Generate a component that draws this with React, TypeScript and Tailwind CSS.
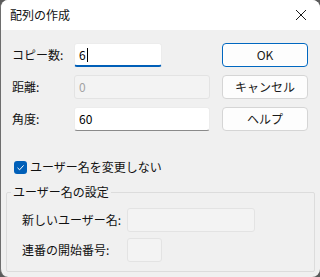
import { useState } from "react"

const font = { fontFamily: '"Noto Sans CJK JP", "Noto Sans", sans-serif' }

function Field({ value, width, disabled, focused }: { value: string; width: string; disabled?: boolean; focused?: boolean }) {
    if (disabled) {
        return (
            <div className={`${width} h-[24px] rounded-[3px] border border-[#e3e3e3] bg-[#f3f3f3] px-[4px] flex items-center text-[12px] text-[#a3a3a3]`}>
                {value}
            </div>
        )
    }
    return (
        <div
            className={`${width} h-[24px] rounded-[3px] border border-[#ececec] bg-white px-[4px] flex items-center text-[12px] text-black ${
                focused ? "border-b-2 border-b-[#005fb8]" : "border-b-[#8a8a8a]"
            }`}
        >
            {value}
            {focused && <span className="ml-[1px] inline-block h-[14px] w-[1px] bg-black" />}
        </div>
    )
}

function Btn({ label, primary }: { label: string; primary?: boolean }) {
    return (
        <button
            type="button"
            className={`h-[24px] w-[86px] rounded-[4px] bg-[#fdfdfd] text-[12px] text-[#1a1a1a] ${
                primary ? "border border-[#0067c0] shadow-[inset_0_0_0_1px_#ffffff]" : "border border-[#d5d5d5]"
            }`}
        >
            {label}
        </button>
    )
}

export default function App() {
    const [keepName, setKeepName] = useState(true)

    return (
        <div className="w-[320px] h-[277px] bg-[#5b5b5b]" style={font}>
            <div className="flex h-full flex-col overflow-hidden rounded-[8px] border-l border-l-[#6e6e6e] bg-[#f0f0f0]">
                <div className="flex h-[30px] shrink-0 items-center justify-between bg-white pl-[9px] pr-[12px]">
                    <span className="text-[12px] text-[#111]">配列の作成</span>
                    <svg width="12" height="12" viewBox="0 0 12 12" className="mr-[1px]">
                        <path d="M1 1 L11 11 M11 1 L1 11" stroke="#1a1a1a" strokeWidth="1" />
                    </svg>
                </div>

                <div className="flex pt-[13px] pr-[12px]">
                    <div className="flex flex-1 flex-col gap-[8px] pl-[11px]">
                        <div className="flex h-[24px] items-center">
                            <span className="w-[62px] text-[12px] text-[#111]">コピー数:</span>
                            <Field value="6" width="w-[88px]" focused />
                        </div>
                        <div className="flex h-[24px] items-center">
                            <span className="w-[62px] text-[12px] text-[#111]">距離:</span>
                            <Field value="0" width="w-[136px]" disabled />
                        </div>
                        <div className="flex h-[24px] items-center">
                            <span className="w-[62px] text-[12px] text-[#111]">角度:</span>
                            <Field value="60" width="w-[136px]" />
                        </div>
                    </div>
                    <div className="flex flex-col gap-[8px]">
                        <Btn label="OK" primary />
                        <Btn label="キャンセル" />
                        <Btn label="ヘルプ" />
                    </div>
                </div>

                <label className="mt-[28px] ml-[13px] flex h-[16px] items-center gap-[3px] text-[12px] text-[#111]">
                    <span
                        onClick={() => setKeepName(!keepName)}
                        className="flex h-[13px] w-[13px] items-center justify-center rounded-[3px] bg-[#005fb8]"
                    >
                        {keepName && (
                            <svg width="9" height="9" viewBox="0 0 9 9">
                                <path d="M1.5 4.8 L3.6 6.8 L7.6 2.4" fill="none" stroke="white" strokeWidth="1" />
                            </svg>
                        )}
                    </span>
                    ユーザー名を変更しない
                </label>

                <fieldset className="mx-[5px] mt-[9px] rounded-[2px] border border-[#dcdcdc] pb-[9px]">
                    <legend className="ml-[4px] px-[2px] text-[12px] leading-[16px] text-[#111]">ユーザー名の設定</legend>
                    <div className="flex flex-col gap-[6px] pl-[15px] pt-[8px]">
                        <div className="flex h-[24px] items-center">
                            <span className="w-[105px] text-[12px] text-[#111]">新しいユーザー名:</span>
                            <Field value="" width="w-[128px]" disabled />
                        </div>
                        <div className="flex h-[24px] items-center">
                            <span className="w-[105px] text-[12px] text-[#111]">連番の開始番号:</span>
                            <Field value="" width="w-[35px]" disabled />
                        </div>
                    </div>
                </fieldset>
            </div>
        </div>
    )
}
